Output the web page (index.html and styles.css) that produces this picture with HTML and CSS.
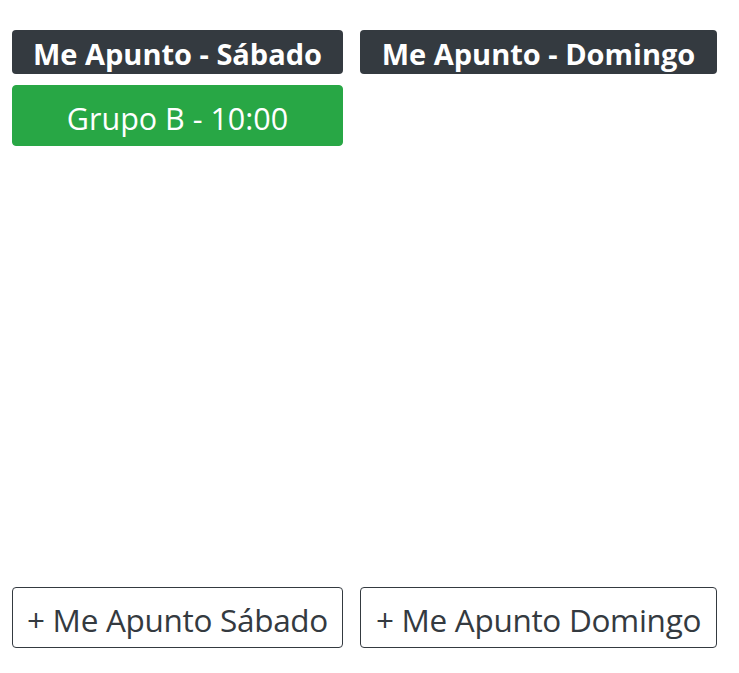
FILE: index.html
```html
<!DOCTYPE html>
<html lang="es">
<head>
<meta charset="utf-8">
<title>Me Apunto</title>
<link rel="stylesheet" href="styles.css">
</head>
<body>
<main class="board">
  <h2 class="day-badge">Me Apunto - Sábado</h2>
  <h2 class="day-badge">Me Apunto - Domingo</h2>
  <div class="slot-list">
    <button class="slot">Grupo B - 10:00</button>
  </div>
  <div class="slot-list"></div>
  <button class="add-btn">+ Me Apunto Sábado</button>
  <button class="add-btn">+ Me Apunto Domingo</button>
</main>
</body>
</html>
```
FILE: styles.css
```css
* { box-sizing: border-box; }
html, body { margin: 0; padding: 0; background: #fff; }
body { font-family: "Open Sans", "Noto Sans", sans-serif; }
.board {
  height: 673px;
  padding: 30px 0 25px 12px;
  display: grid;
  grid-template-columns: 331px 357px;
  grid-template-rows: 44px 1fr 61px;
  column-gap: 17px;
  row-gap: 11px;
}
.day-badge {
  margin: 0;
  padding-top: 3px;
  background: #343a40;
  color: #fff;
  border-radius: 4px;
  font-size: 29px;
  font-weight: 700;
  line-height: 41px;
  text-align: center;
  white-space: nowrap;
}
.slot-list { display: flex; flex-direction: column; gap: 8px; }
.slot {
  height: 61px;
  border: 1px solid #28a745;
  background: #28a745;
  color: #fff;
  border-radius: 4px;
  font-family: inherit;
  font-size: 30.5px;
  padding: 4px 8px 0;
  white-space: nowrap;
}
.add-btn {
  height: 61px;
  border: 1px solid #343a40;
  background: #fff;
  color: #343a40;
  border-radius: 4px;
  font-family: inherit;
  font-size: 31.5px;
  padding: 4px 4px 0;
  white-space: nowrap;
  letter-spacing: -0.3px;
}
```
